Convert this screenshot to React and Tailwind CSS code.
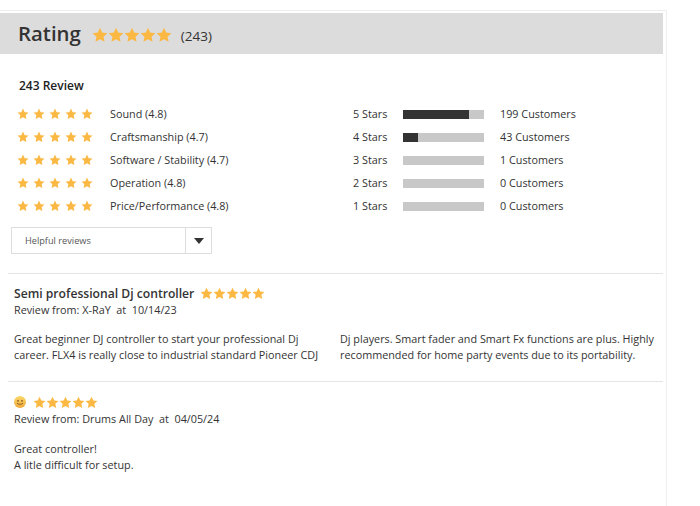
const Star = ({ size }) => (
  <svg width={size} height={size} viewBox="0 0 24 24" className="shrink-0" aria-hidden="true">
    <path d="M12 1.2l3.3 7.1 7.7.9-5.7 5.3 1.5 7.7L12 18.4l-6.8 3.8 1.5-7.7L1 9.2l7.7-.9z" fill="#fbb843" />
  </svg>
);

const Stars = ({ size, className }) => (
  <div className={`flex items-center ${className}`}>
    {[0, 1, 2, 3, 4].map((i) => (
      <Star key={i} size={size} />
    ))}
  </div>
);

const rows = [
  ["Sound (4.8)", "5 Stars", 82, "199 Customers"],
  ["Craftsmanship (4.7)", "4 Stars", 18, "43 Customers"],
  ["Software / Stability (4.7)", "3 Stars", 0, "1 Customers"],
  ["Operation (4.8)", "2 Stars", 0, "0 Customers"],
  ["Price/Performance (4.8)", "1 Stars", 0, "0 Customers"],
];

export default function App() {
  return (
    <div className="h-[506px] w-[700px] overflow-hidden bg-white pt-[10px] font-['Open_Sans',sans-serif] text-[#333]">
      <div className="h-[496px] w-[667px] border-t border-r border-t-[#eeeeee] border-r-[#eeeeee] pt-[2px] pr-[3px]">
        <div className="flex h-[41px] items-center bg-[#dcdcdc] pl-[18px]">
          <span className="text-[20.4px] font-semibold leading-none">Rating</span>
          <Stars size={16} className="ml-[11px] mt-[2px] gap-0" />
          <span className="ml-[9px] mt-[5px] text-[13.5px]">(243)</span>
        </div>

        <h2 className="mt-[23px] ml-[19px] text-[12px] font-semibold leading-[18px] text-[#222]">243 Review</h2>

        <div className="mt-[8px] flex flex-col">
          {rows.map(([label, stars, pct, customers]) => (
            <div key={label} className="flex h-[23px] items-center text-[10.8px]">
              <Stars size={12} className="ml-[17px] w-[93px] gap-[4px] pb-[2px]" />
              <span className="w-[243px]">{label}</span>
              <span className="w-[50px]">{stars}</span>
              <div className="h-[9px] w-[81px] bg-[#c8c8c8]">
                <div className="h-full bg-[#333]" style={{ width: `${pct}%` }} />
              </div>
              <span className="ml-[16px]">{customers}</span>
            </div>
          ))}
        </div>

        <div className="mt-[9px] ml-[11px] flex h-[27px] w-[201px] items-center border border-[#dddddd]">
          <span className="flex-1 pl-[13px] text-[9.2px] text-[#555]">Helpful reviews</span>
          <div className="flex h-full w-[26px] items-center justify-center border-l border-[#dddddd]">
            <div className="h-0 w-0 border-x-[5px] border-t-[6px] border-x-transparent border-t-[#333]" />
          </div>
        </div>

        <section className="mt-[19px] ml-[8px] border-t border-[#e4e4e4] pt-[11px] pb-[18px] pl-[6px] text-[10.8px] leading-[16px]">
          <div className="flex h-[17px] items-center">
            <span className="text-[12.15px] font-semibold">Semi professional Dj controller</span>
            <Stars size={13} className="ml-[6px] gap-0" />
          </div>
          <p>Review from: X-RaY&nbsp; at&nbsp; 10/14/23</p>
          <div className="mt-[13px] flex">
            <p className="w-[326px]">
              Great beginner DJ controller to start your professional Dj
              <br />
              career. FLX4 is really close to industrial standard Pioneer CDJ
            </p>
            <p className="flex-1">
              Dj players. Smart fader and Smart Fx functions are plus. Highly
              <br />
              recommended for home party events due to its portability.
            </p>
          </div>
        </section>

        <section className="ml-[8px] border-t border-[#e4e4e4] pt-[11px] pl-[6px] text-[10.8px] leading-[16px]">
          <div className="flex h-[18px] items-center">
            <svg width="12" height="12" viewBox="0 0 12 12" aria-hidden="true">
              <defs>
                <linearGradient id="face" x1="0" y1="0" x2="0" y2="1">
                  <stop offset="0" stopColor="#fbd968" />
                  <stop offset="1" stopColor="#eea83a" />
                </linearGradient>
              </defs>
              <circle cx="6" cy="6" r="6" fill="url(#face)" />
              <circle cx="4" cy="4.8" r="0.9" fill="#8a5a20" />
              <circle cx="8" cy="4.8" r="0.9" fill="#8a5a20" />
              <path d="M3 7.2c1.5 1.5 4.5 1.5 6 0" stroke="#8a5a20" strokeWidth="0.9" fill="none" />
            </svg>
            <Stars size={13} className="ml-[7px] gap-0" />
          </div>
          <p>Review from: Drums All Day&nbsp; at&nbsp; 04/05/24</p>
          <p className="mt-[14px]">Great controller!</p>
          <p>A litle difficult for setup.</p>
        </section>
      </div>
    </div>
  );
}
